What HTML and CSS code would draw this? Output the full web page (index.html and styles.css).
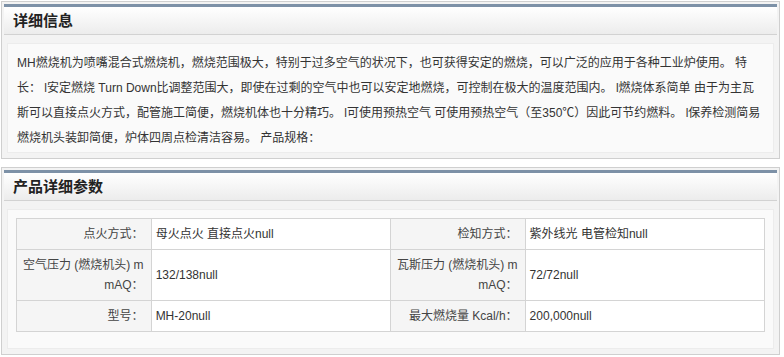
FILE: index.html
```html
<!DOCTYPE html>
<html lang="zh-CN">
<head>
    <meta charset="UTF-8" />
    <title>产品详情</title>
    <link rel="stylesheet" href="styles.css">
</head>
<body>

<!-- 详细信息 -->
<div class="panel">
    <div class="panel-head">详细信息</div>
    <div class="panel-body">
        <div class="panel-inner desc">
            MH燃烧机为喷嘴混合式燃烧机，燃烧范围极大，特别于过多空气的状况下，也可获得安定的燃烧，可以广泛的应用于各种工业炉使用。 特<br>
            长： l安定燃烧 Turn Down比调整范围大，即使在过剩的空气中也可以安定地燃烧，可控制在极大的温度范围内。 l燃烧体系简单 由于为主瓦<br>
            斯可以直接点火方式，配管施工简便，燃烧机体也十分精巧。 l可使用预热空气 可使用预热空气（至350℃）因此可节约燃料。 l保养检测简易<br>
            燃烧机头装卸简便，炉体四周点检清洁容易。 产品规格：
        </div>
    </div>
</div>

<!-- 产品详细参数 -->
<div class="panel">
    <div class="panel-head">产品详细参数</div>
    <div class="panel-body">
        <div class="panel-inner table-wrap">
            <table class="params">
                <colgroup>
                    <col class="c-label"><col class="c-value"><col class="c-label"><col class="c-value">
                </colgroup>
                <tr>
                    <th>点火方式：</th>
                    <td>母火点火 直接点火null</td>
                    <th>检知方式：</th>
                    <td>紫外线光 电管检知null</td>
                </tr>
                <tr>
                    <th>空气压力 (燃烧机头) m mAQ：</th>
                    <td>132/138null</td>
                    <th>瓦斯压力 (燃烧机头) m mAQ：</th>
                    <td>72/72null</td>
                </tr>
                <tr>
                    <th>型号：</th>
                    <td>MH-20null</td>
                    <th>最大燃烧量 Kcal/h：</th>
                    <td>200,000null</td>
                </tr>
            </table>
        </div>
    </div>
</div>

</body>
</html>
```

FILE: styles.css
```css
body {
    margin: 0;
    padding: 1px 0 0 1px;
    font-family: "Liberation Sans", "Noto Sans CJK SC", sans-serif;
    font-size: 12px;
    color: #333;
    background: #fff;
}

.panel {
    width: 773px;
    border: 1px solid #cfcfcf;
    padding: 2px;
    margin-bottom: 8px;
    background: #f3f3f3;
}

.panel-head {
    border-top: 3px solid #7d91a7;
    border-bottom: 1px solid #d2d2d2;
    height: 27px;
    line-height: 27px;
    padding-left: 9px;
    font-size: 15px;
    font-weight: bold;
    color: #222;
    background: linear-gradient(#ffffff, #ececec);
}

.panel-body {
    padding: 8px 3px 3px 3px;
}

.panel-inner {
    background: #fafafa;
    border: 1px solid #ececec;
}

.desc {
    line-height: 25px;
    padding: 7px 4px 1px 9px;
    white-space: nowrap;
}

.table-wrap {
    padding: 8px 8px 16px 8px;
}

.params {
    width: 100%;
    border-collapse: collapse;
    table-layout: fixed;
    background: #fff;
}

.c-label {
    width: 18%;
}

.c-value {
    width: 32%;
}

.params th,
.params td {
    border: 1px solid #d4d4d4;
    padding: 5px 4px;
    line-height: 20px;
    font-weight: normal;
    vertical-align: middle;
}

.params th {
    text-align: right;
    padding-right: 7px;
    background: #f5f5f5;
    color: #444;
}

.params td {
    text-align: left;
}
```
